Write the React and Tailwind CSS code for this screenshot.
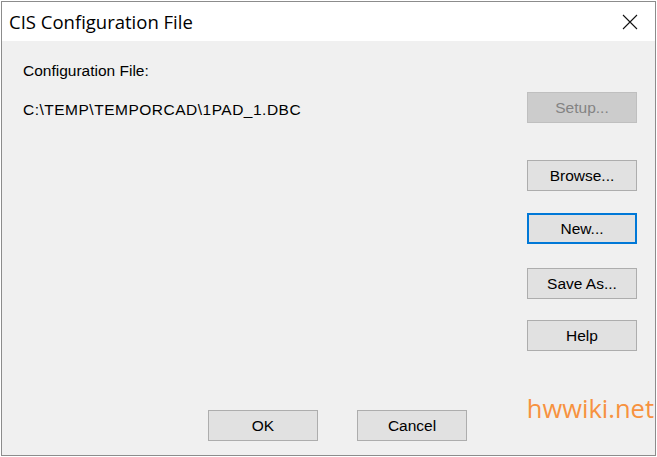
import React from "react";

const uiFont = { fontFamily: '"Liberation Sans", Arial, sans-serif' };

const DlgButton = ({ label, disabled, focused, className = "" }) => {
  const look = disabled
    ? "bg-[#cccccc] border border-[#bfbfbf] text-[#838383]"
    : focused
    ? "bg-[#e1e1e1] border-2 border-[#0078d7] text-black"
    : "bg-[#e1e1e1] border border-[#adadad] text-black";
  return (
    <button
      disabled={disabled}
      className={`w-[110px] h-[31px] flex items-center justify-center text-[15.5px] ${look} ${className}`}
      style={uiFont}
    >
      {label}
    </button>
  );
};

const App = () => {
  return (
    <div className="w-[657px] h-[457px] bg-white pt-px pl-px">
      <div className="w-[655px] h-[455px] border border-[#8c8c8c] flex flex-col bg-[#f0f0f0]">
        {/* title bar */}
        <div className="h-[39px] bg-white flex items-center justify-between pl-[7px] pr-[17px] shrink-0">
          <span
            className="text-[18.5px] text-black"
            style={{ fontFamily: '"Open Sans", "Noto Sans", sans-serif' }}
          >
            CIS Configuration File
          </span>
          <svg width="16" height="16" viewBox="0 0 16 16">
            <path d="M1 1L15 15M15 1L1 15" stroke="#111" strokeWidth="1.1" fill="none" />
          </svg>
        </div>

        {/* body */}
        <div className="flex-1 relative flex flex-col">
          <div className="flex flex-1">
            <div className="flex-1 pl-[21px] pt-[21px] text-[15.5px] text-black" style={uiFont}>
              <div className="h-[18px] leading-[18px]">Configuration File:</div>
              <div className="h-[18px] leading-[18px] mt-[21px] tracking-[0.5px]">
                C:\TEMP\TEMPORCAD\1PAD_1.DBC
              </div>
            </div>
            <div className="w-[128px] pt-[51px] flex flex-col">
              <DlgButton label="Setup..." disabled />
              <DlgButton label="Browse..." className="mt-[37px]" />
              <DlgButton label="New..." focused className="mt-[22px]" />
              <DlgButton label="Save As..." className="mt-[24px]" />
              <DlgButton label="Help" className="mt-[21px]" />
            </div>
          </div>
          <div className="flex pl-[206px] gap-[39px] pb-[14px]">
            <DlgButton label="OK" />
            <DlgButton label="Cancel" />
          </div>
          <span
            className="absolute right-[1px] bottom-[28px] text-[25.5px] text-[#f7923f]"
            style={{ fontFamily: '"Open Sans", "Noto Sans", sans-serif' }}
          >
            hwwiki.net
          </span>
        </div>
      </div>
    </div>
  );
};

export default App;
